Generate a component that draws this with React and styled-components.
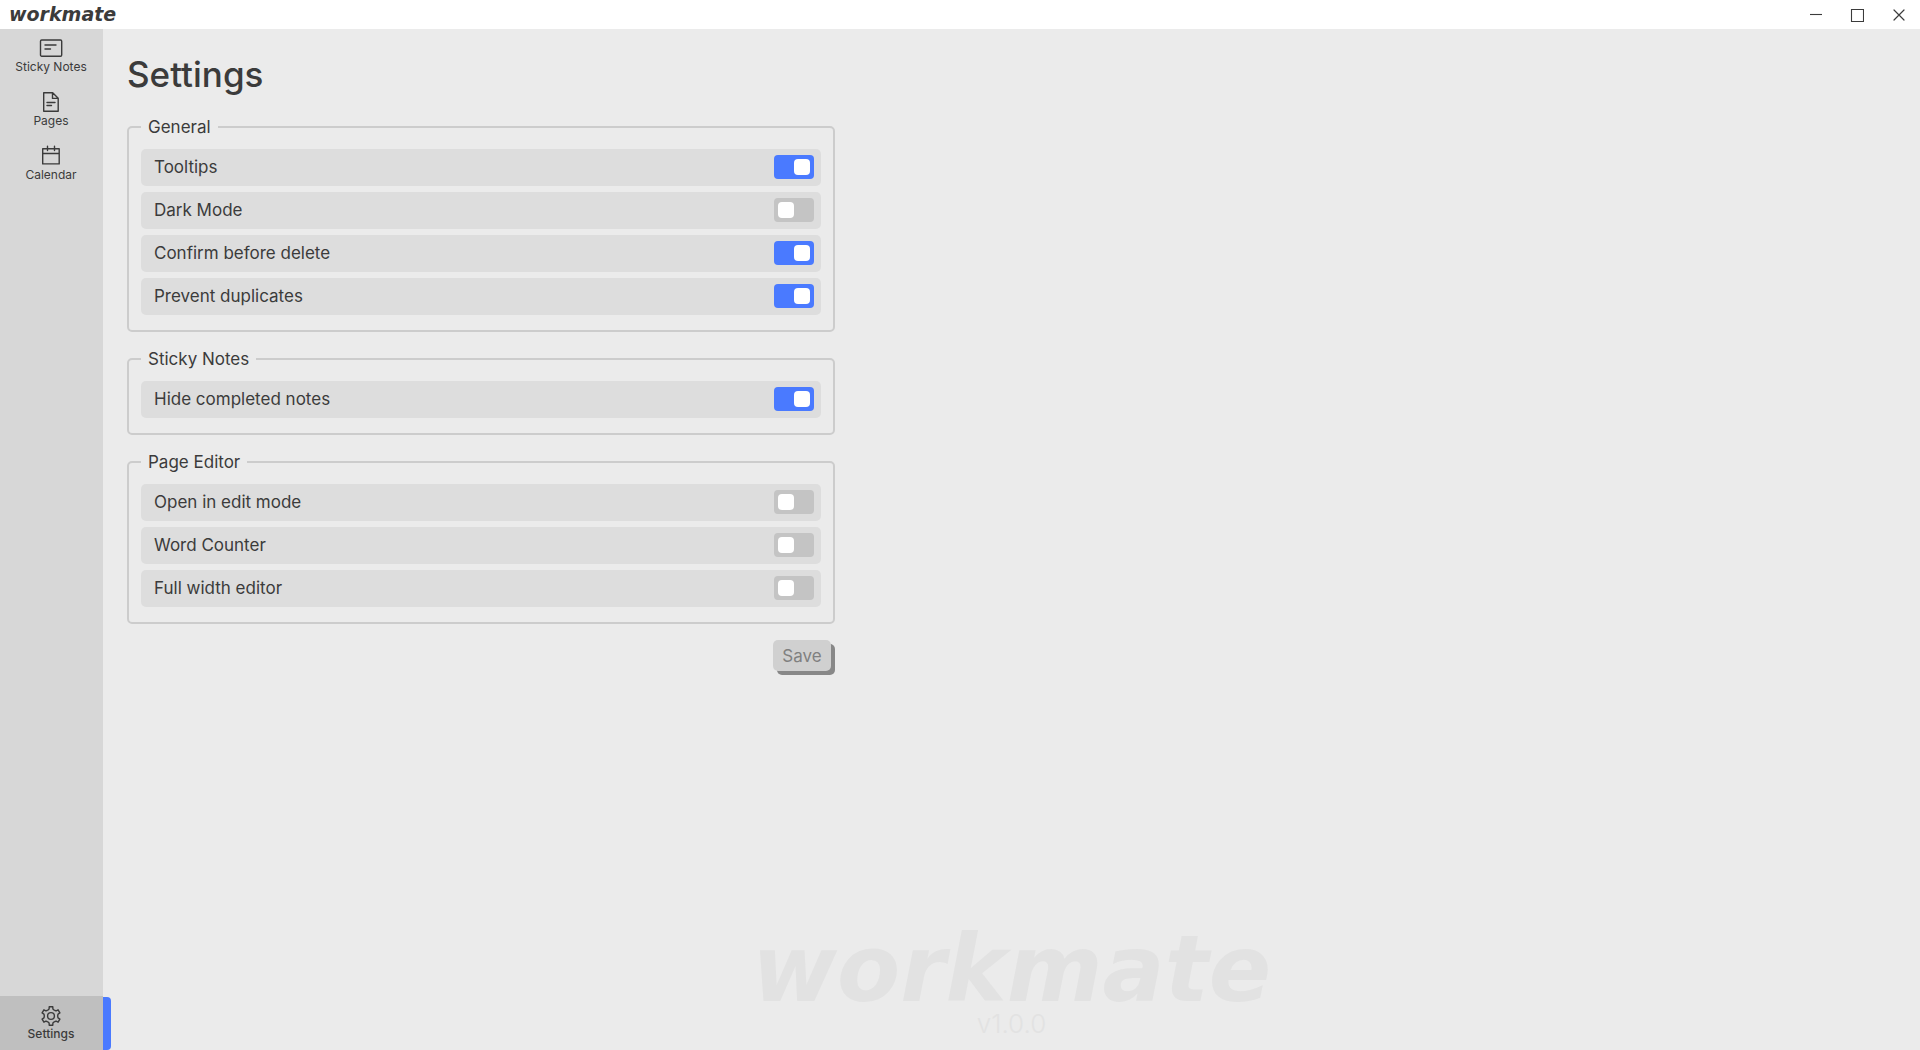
import React, { useState } from "react";
import styled, { createGlobalStyle } from "styled-components";

const GlobalStyle = createGlobalStyle`
  *, *::before, *::after { box-sizing: border-box; }
  html, body { margin: 0; padding: 0; }
  body, button, input {
    font-family: Inter, Roboto, "Liberation Sans", sans-serif;
    color: #3b3b3b;
  }
`;

const Window = styled.div`
  display: flex;
  flex-direction: column;
  height: 100vh;
  background: #ebebeb;
  overflow: hidden;
`;

const TitleBar = styled.header`
  display: flex;
  align-items: center;
  justify-content: space-between;
  flex: none;
  height: 29px;
  padding-left: 9px;
  background: #fff;
`;

const Wordmark = styled.span`
  font-family: "DejaVu Sans", sans-serif;
  font-weight: 700;
  font-style: italic;
  font-size: ${(p) => (p.$large ? 92 : 19)}px;
  line-height: ${(p) => (p.$large ? 82 : 19)}px;
`;

const WindowControls = styled.div`
  display: flex;
  height: 100%;
`;

const ControlButton = styled.button`
  display: grid;
  place-items: center;
  width: 42px;
  height: 100%;
  padding: 0;
  border: 0;
  background: none;
`;

const Body = styled.div`
  display: flex;
  flex: 1;
  min-height: 0;
`;

const Sidebar = styled.nav`
  display: flex;
  flex-direction: column;
  justify-content: space-between;
  flex: none;
  width: 103px;
  background: #d7d7d7;
`;

const NavGroup = styled.div`
  display: flex;
  flex-direction: column;
`;

const NavLink = styled.a`
  position: relative;
  display: flex;
  flex-direction: column;
  align-items: center;
  height: 54px;
  padding: 8px 1px 0 0;
  font-size: 12px;
  line-height: 16px;
  font-weight: ${(p) => (p.$active ? 500 : 400)};
  color: #3b3b3b;
  text-decoration: none;
  background: ${(p) => (p.$active ? "#bfbfbf" : "transparent")};

  svg { display: block; }
`;

const ActiveMarker = styled.span`
  position: absolute;
  left: 100%;
  top: 1px;
  bottom: 0;
  width: 8px;
  border-radius: 0 4px 4px 0;
  background: #4a7aff;
`;

const Main = styled.main`
  display: flex;
  flex-direction: column;
  flex: 1;
  min-width: 0;
  padding: 24px 24px 13px;
`;

const Title = styled.h1`
  margin: 0 0 21px;
  font-size: 35px;
  line-height: 42px;
  font-weight: 500;
`;

const Form = styled.form`
  display: flex;
  flex-direction: column;
  gap: 16px;
  width: 100%;
  max-width: 708px;
`;

const Section = styled.fieldset`
  display: block;
  min-width: 0;
  margin: 0;
  padding: 11px 12px 15px;
  border: 2px solid #cccccc;
  border-radius: 5px;
`;

const Legend = styled.legend`
  padding: 0 7px;
  font-size: 17px;
  line-height: 22px;
`;

const Rows = styled.div`
  display: flex;
  flex-direction: column;
  gap: 6px;
`;

const Row = styled.label`
  display: flex;
  align-items: center;
  justify-content: space-between;
  height: 37px;
  padding: 0 7px 1px 13px;
  border-radius: 5px;
  background: #dddddd;
  font-size: 17px;
  line-height: 22px;
`;

const Toggle = styled.input`
  appearance: none;
  display: flex;
  flex: none;
  width: 40px;
  height: 24px;
  margin: 0;
  padding: 4px;
  border-radius: 4px;
  background: #c4c4c4;

  &::before {
    content: "";
    width: 16px;
    height: 16px;
    border-radius: 4px;
    background: #fff;
  }

  &:checked {
    justify-content: flex-end;
    background: #4a7aff;
  }
`;

const SaveButton = styled.button`
  align-self: flex-end;
  width: 58px;
  height: 31px;
  margin-right: 4px;
  padding: 0;
  border: 0;
  border-radius: 5px;
  background: #d0d0d0;
  box-shadow: 4px 4px 0 #888888;
  color: #808080;
  font-size: 17px;
  line-height: 22px;
`;

const Watermark = styled.footer`
  display: flex;
  flex-direction: column;
  align-items: center;
  margin-top: auto;
  color: #e2e2e2;
`;

const Version = styled.span`
  font-size: 26px;
  line-height: 26px;
  font-weight: 300;
`;

const Icon = ({ width = 24, height = 22, weight = 1.4, children }) => (
  <svg
    width={width}
    height={height}
    viewBox={`0 0 ${width} ${height}`}
    fill="none"
    stroke="#3b3b3b"
    strokeWidth={weight}
    strokeLinecap="round"
    strokeLinejoin="round"
    aria-hidden="true"
  >
    {children}
  </svg>
);

const NoteIcon = () => (
  <Icon>
    <rect x="1.5" y="3" width="21.2" height="16.2" rx="1.2" />
    <path d="M6 8h11M6 12h5.500" />
  </Icon>
);

const PageIcon = () => (
  <Icon>
    <path d="M4.700 1.700h9l5.500 5.500v13H4.700zM13.500 1.900v5.500h5.500M8 11.500h8M8 14.500h4.500" />
  </Icon>
);

const CalendarIcon = () => (
  <Icon>
    <path d="M3.700 3.700h16.500v15.200H3.700zM3.700 8.500h16.500M8.500 1.300v4.200M15.500 1.300v4.200" />
  </Icon>
);

const gearPath = () => {
  const points = [];
  for (let i = 0; i < 6; i++) {
    const base = -90 + i * 60;
    [[-24, 6.8], [-15, 7.3], [-11, 9.4], [11, 9.4], [15, 7.3], [24, 6.8]].forEach(([a, r]) => {
      const t = ((base + a) * Math.PI) / 180;
      points.push(`${(12 + r * Math.cos(t)).toFixed(2)} ${(12 + r * Math.sin(t)).toFixed(2)}`);
    });
  }
  return `M${points.join("L")}Z`;
};

const GearIcon = () => (
  <Icon>
    <path d={gearPath()} />
    <circle cx="12" cy="12" r="3.4" />
  </Icon>
);

const NAV = [
  { label: "Sticky Notes", Glyph: NoteIcon },
  { label: "Pages", Glyph: PageIcon },
  { label: "Calendar", Glyph: CalendarIcon },
];

const SECTIONS = [
  {
    title: "General",
    options: [
      ["Tooltips", true],
      ["Dark Mode", false],
      ["Confirm before delete", true],
      ["Prevent duplicates", true],
    ],
  },
  { title: "Sticky Notes", options: [["Hide completed notes", true]] },
  {
    title: "Page Editor",
    options: [
      ["Open in edit mode", false],
      ["Word Counter", false],
      ["Full width editor", false],
    ],
  },
];

const Setting = ({ label, initial }) => {
  const [on, setOn] = useState(initial);
  return (
    <Row>
      {label}
      <Toggle type="checkbox" role="switch" checked={on} onChange={(e) => setOn(e.target.checked)} />
    </Row>
  );
};

const App = () => (
  <>
    <GlobalStyle />
    <Window>
      <TitleBar>
        <Wordmark>workmate</Wordmark>
        <WindowControls>
          <ControlButton aria-label="Minimize">
            <Icon width={14} height={14} weight={1.1}>
              <path d="M2 6.500h12" strokeLinecap="butt" />
            </Icon>
          </ControlButton>
          <ControlButton aria-label="Maximize">
            <Icon width={14} height={14} weight={1.1}>
              <path d="M1.500 1.500h12v12h-12z" strokeLinejoin="miter" />
            </Icon>
          </ControlButton>
          <ControlButton aria-label="Close">
            <Icon width={14} height={14} weight={1.2}>
              <path d="M2 2l10 10M12 2L2 12" />
            </Icon>
          </ControlButton>
        </WindowControls>
      </TitleBar>
      <Body>
        <Sidebar>
          <NavGroup>
            {NAV.map(({ label, Glyph }) => (
              <NavLink key={label} href="#">
                <Glyph />
                {label}
              </NavLink>
            ))}
          </NavGroup>
          <NavLink href="#" $active aria-current="page">
            <GearIcon />
            Settings
            <ActiveMarker />
          </NavLink>
        </Sidebar>
        <Main>
          <Title>Settings</Title>
          <Form onSubmit={(e) => e.preventDefault()}>
            {SECTIONS.map(({ title, options }) => (
              <Section key={title}>
                <Legend>{title}</Legend>
                <Rows>
                  {options.map(([label, initial]) => (
                    <Setting key={label} label={label} initial={initial} />
                  ))}
                </Rows>
              </Section>
            ))}
            <SaveButton disabled>Save</SaveButton>
          </Form>
          <Watermark>
            <Wordmark $large>workmate</Wordmark>
            <Version>v1.0.0</Version>
          </Watermark>
        </Main>
      </Body>
    </Window>
  </>
);

export default App;
